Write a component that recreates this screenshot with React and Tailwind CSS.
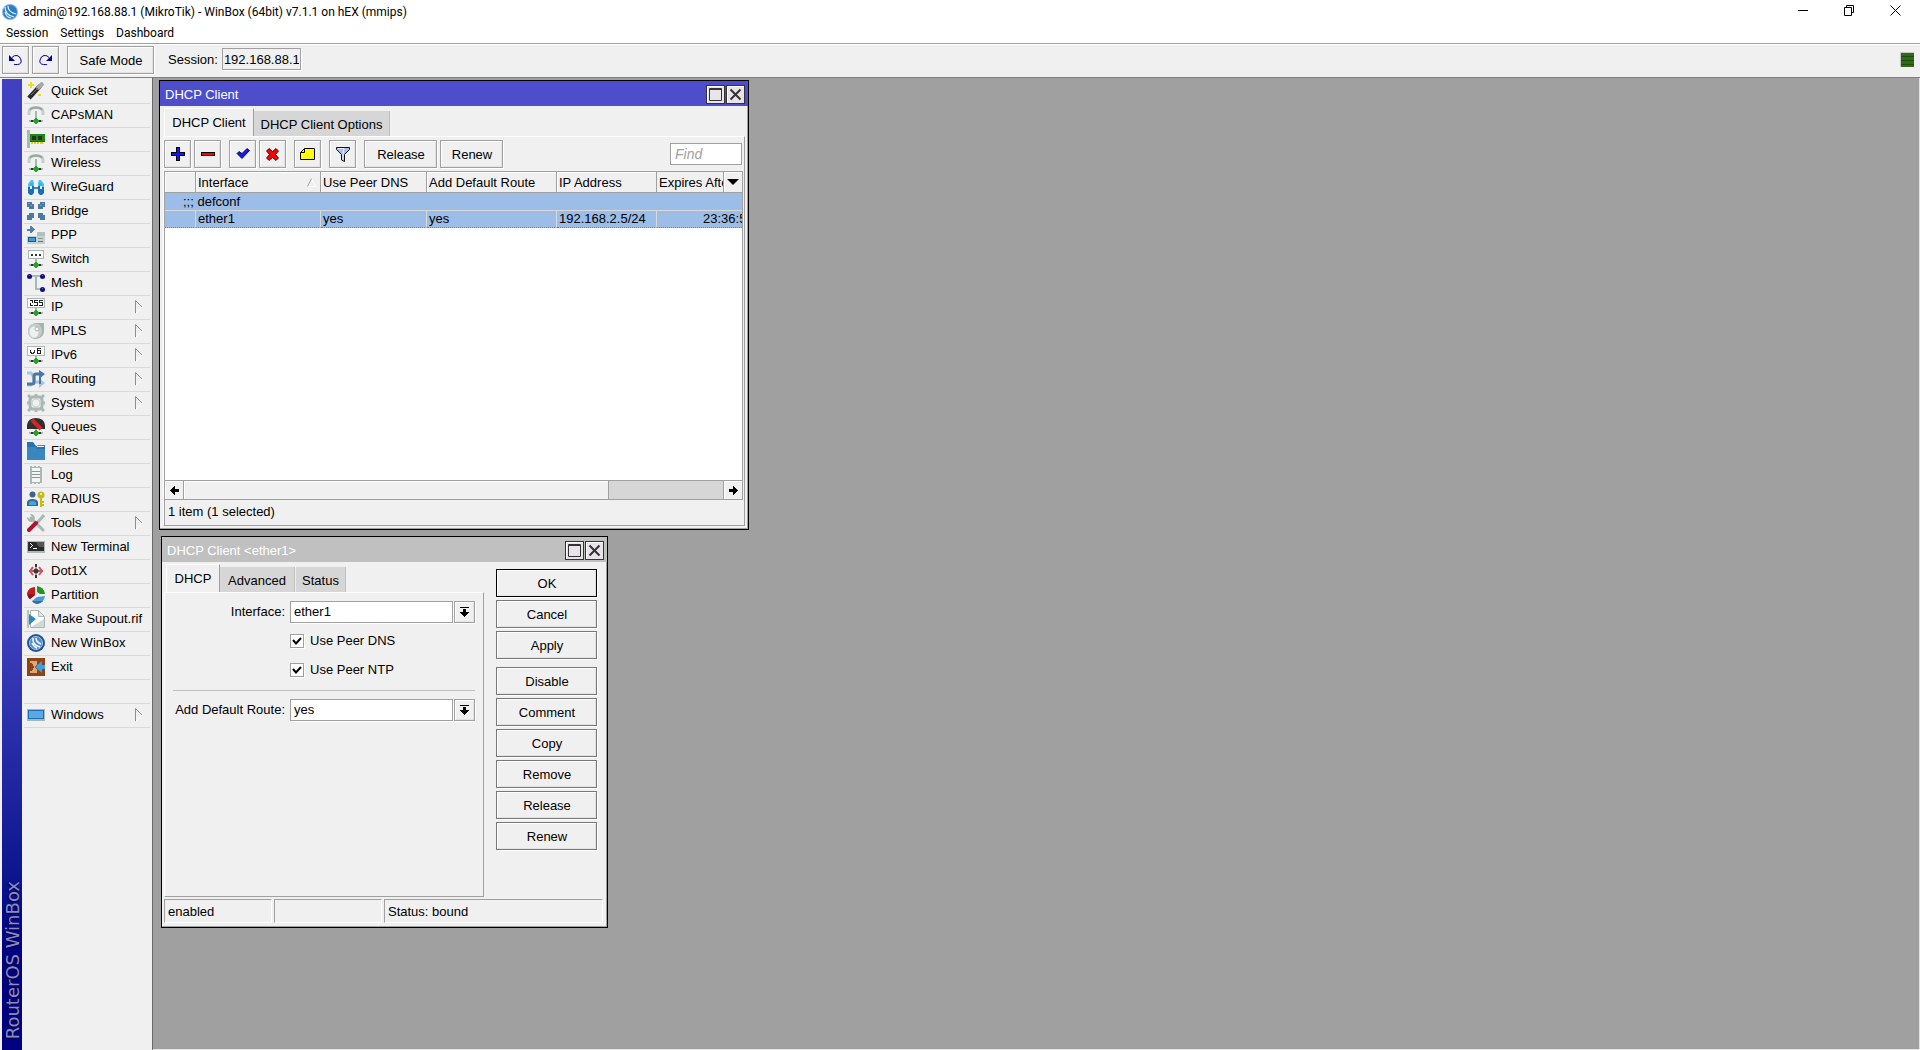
import React from "react";

const bevel =
  "border border-[#a0a0a0] bg-[#f0f0f0] shadow-[1px_1px_0_#fff,inset_1px_1px_0_#fff,inset_-1px_-1px_0_#e3e3e3]";

const Svg = ({ children, smooth }) => (
  <svg
    width="18"
    height="18"
    viewBox="0 0 18 18"
    fill="none"
    shapeRendering={smooth ? "auto" : "crispEdges"}
    className="shrink-0"
    aria-hidden="true"
  >
    {children}
  </svg>
);

/* Network plug drawn under several icons */
const Plug = () => (
  <>
    <path d="M2 14h14v2H2z" fill="#a9b8b4" />
    <path d="M4 14h10v2H4z" fill="#333" />
    <path d="M8 12h2v1h1v1h1v2h-1v1h-1v1H8v-1H7v-1H6v-2h1v-1h1z" fill="#1fa81f" />
  </>
);

const Antenna = () => (
  <Svg>
    <g shapeRendering="auto">
      <path d="M2 9V6Q2 1.500 9 1.500T16 6V9" stroke="#c3cfcc" strokeWidth="3" />
      <path d="M3 4Q5 1.500 9 1.500T15 4" stroke="#98a6a2" strokeWidth="2" />
    </g>
    <path d="M8 5h2v8H8z" fill="#a9b8b4" />
    <Plug />
  </Svg>
);

const icons = {
  wand: (
    <Svg smooth>
      <path d="M2 16L13 4" stroke="#2b2b2b" strokeWidth="4.500" />
      <path d="M11.500 5.500l3-3" stroke="#a8a8a8" strokeWidth="4.500" strokeLinecap="round" />
      <path d="M4 13l7-7" stroke="#6d6d6d" strokeWidth="1" />
      <path d="M3 0h2v2h2v2H5v2H3V4H1V2h2zM11 12h3v2h-3z" fill="#e6e01c" />
    </Svg>
  ),
  antenna: <Antenna />,
  nic: (
    <Svg>
      <path d="M0 0h3v18H0z" fill="#a9b8b4" />
      <path d="M3 4h15v8H3z" fill="#1f8a12" />
      <path d="M5 6h4v4H5zM11 6h4v4h-4z" fill="#2a2f2a" />
      <path d="M4 12h2v2H4zM7 12h2v2H7zM10 12h2v2h-2zM13 12h3v2h-3z" fill="#e0cf13" />
      <path d="M3 11h15v1H3z" fill="#136b0a" />
    </Svg>
  ),
  wireguard: (
    <Svg smooth>
      <path d="M4 2h2l1 3v4H5V5L3 6v4H1V6zM12 2h2l3 4v4h-2V6l-2-1v4h-2V5z" fill="#4fc1f5" />
      <path d="M1 9h2v2h2V8h2v7l-2 2H3l-2-2zM11 8h2v3h2V9h2v6l-2 2h-2l-2-2z" fill="#1a6fb8" />
      <path d="M3 5h3v3H3zM12 5h3v3h-3z" fill="#38b0ea" />
      <path d="M7 9h4v2H7z" fill="#2d8fd2" />
    </Svg>
  ),
  bridge: (
    <Svg>
      <g fill="#4879a3">
        <path d="M0 0h5v2h2v5H2V5H0z" />
        <path d="M18 0h-5v2h-2v5h5V5h2z" />
        <path d="M0 18h5v-2h2v-5H2v2H0z" />
        <path d="M18 18h-5v-2h-2v-5h5v2h2z" />
      </g>
      <path d="M1 1h2v1H1zM15 1h2v1h-2zM3 3h2v1H3zM13 3h2v1h-2z" fill="#6d9cc2" />
    </Svg>
  ),
  ppp: (
    <Svg>
      <path d="M0 3h3V0h2v1h1v1h1v1h1v1H7v1H6v1H5v1H3V5H0z" fill="#5480a8" />
      <path d="M10 6h8v6h-8z" fill="#b5c0bd" />
      <path d="M0 10h18v8H0z" fill="#c9d1cf" />
      <path d="M1 11h8v5H1z" fill="#175f9c" />
      <path d="M2 12h6v3H2z" fill="#3c9be0" />
      <path d="M11 12h5v1h-5z" fill="#8d9a96" />
      <path d="M11 15h5v1h-5z" fill="#27a31d" />
    </Svg>
  ),
  switch: (
    <Svg>
      <path d="M1 0h16v9H1z" fill="#a9b8b4" />
      <path d="M2 1h14v7H2z" fill="#fff" />
      <path d="M4 4h2v2H4zM8 4h2v2H8zM12 4h2v2h-2z" fill="#333" />
      <path d="M8 9h2v4H8z" fill="#a9b8b4" />
      <Plug />
    </Svg>
  ),
  mesh: (
    <Svg>
      <path d="M3 2h12M9 2v13h6" stroke="#a9b8b4" strokeWidth="2" />
      <g shapeRendering="auto" fill="#10107e">
        <circle cx="2.500" cy="2.500" r="2.500" />
        <circle cx="15.500" cy="2.500" r="2.500" />
        <circle cx="15.500" cy="15.500" r="2.500" />
      </g>
      <path d="M2 1h1v1H2zM15 1h1v1h-1zM15 14h1v1h-1z" fill="#5f5fd0" />
    </Svg>
  ),
  ip: (
    <Svg>
      <path d="M0 0h18v10H0z" fill="#a9b8b4" />
      <path d="M1 1h16v8H1z" fill="#fff" />
      <path
        d="M3 2h3v3H4v2h2v1H3V5h2V3H3zM7 2h4v1H8v1h3v4H7V7h3V5H7zM12 2h4v1h-3v1h3v4h-4V7h3V5h-3z"
        fill="#222"
      />
      <path d="M8 10h2v2H8z" fill="#a9b8b4" />
      <Plug />
    </Svg>
  ),
  mpls: (
    <Svg smooth>
      <path d="M8 1h9v9q-1 6-8 7H7Q1 15 1 9 1 3 8 1z" fill="#a5b4b0" />
      <ellipse cx="8" cy="9" rx="7" ry="7.500" fill="#c3cdca" />
      <ellipse cx="7" cy="10" rx="4.500" ry="5.500" fill="#eef1f0" />
      <circle cx="10" cy="7" r="2" fill="#fff" stroke="#a5b4b0" />
    </Svg>
  ),
  ipv6: (
    <Svg>
      <path d="M0 0h18v10H0z" fill="#a9b8b4" />
      <path d="M1 1h16v8H1z" fill="#fff" />
      <path d="M3 4h1v2h1v1h1V6h1V4h1v3H7v1H4V7H3z" fill="#333" />
      <path d="M10 2h4v1h-3v1h3v4h-4zM11 5v2h2V5z" fillRule="evenodd" fill="#222" />
      <path d="M8 10h2v2H8z" fill="#a9b8b4" />
      <Plug />
    </Svg>
  ),
  routing: (
    <Svg smooth>
      <path d="M0 3h4l3 4v5h6M0 15h5" stroke="#a8c6e0" strokeWidth="3" />
      <path d="M12 8l6 5-6 5z" fill="#a8c6e0" />
      <path d="M0 14h5q2 0 2-2V6q0-2 2-2h4" stroke="#4879a3" strokeWidth="3" />
      <path d="M7 4v9M13 4v10" stroke="#4879a3" strokeWidth="2" />
      <path d="M12 0l6 4-6 5z" fill="#4879a3" />
    </Svg>
  ),
  gear: (
    <Svg smooth>
      <rect x="3" y="3" width="12" height="12" rx="3" stroke="#a9b8b4" strokeWidth="3" />
      <path
        d="M9 0v3M9 15v3M0 9h3M15 9h3M1 1l3 3M17 1l-3 3M1 17l3-3M17 17l-3-3"
        stroke="#a9b8b4"
        strokeWidth="3"
      />
      <circle cx="9" cy="9" r="4" stroke="#c7d1ce" fill="#f0f0f0" />
    </Svg>
  ),
  queues: (
    <Svg>
      <path shapeRendering="auto" d="M0 11V7Q1 0 9 0t9 7v4z" fill="#303030" />
      <path shapeRendering="auto" d="M5 2l9 9" stroke="#d3252b" strokeWidth="4" />
      <path d="M8 11h2v2H8z" fill="#a9b8b4" />
      <Plug />
    </Svg>
  ),
  folder: (
    <Svg smooth>
      <path d="M0 0h6l3 4h9v14H0z" fill="#2673ad" />
      <path d="M0 5h9l2-2h7v15H0z" fill="#3a87bf" />
      <path d="M10 4.500h7" stroke="#fff" />
      <path d="M11 5h7v2H9z" fill="#2673ad" />
    </Svg>
  ),
  log: (
    <Svg>
      <path d="M3 0h2v1h2V0h2v1h2V0h2v1h2v16h-2v1h-2v-1H9v1H7v-1H5v1H3z" fill="#a9b8b4" />
      <path d="M5 2h8v14H5z" fill="#f4f6f5" />
      <path d="M5 5h8v1H5zM5 8h8v1H5zM5 11h8v1H5z" fill="#8b9995" />
    </Svg>
  ),
  radius: (
    <Svg smooth>
      <circle cx="5.500" cy="4.500" r="3" fill="#3d6588" />
      <path d="M0 16V12q1-3 5.500-3t5.500 3v4z" fill="#3d6588" />
      <path d="M2 15V12q1-1 3-1t4 1v3z" fill="#38a8ee" />
      <circle cx="14" cy="5" r="3.500" fill="#c9bb10" />
      <circle cx="14" cy="4" r="1" fill="#f0f0f0" />
      <path d="M14 8v9M14 12h3M14 15h3" stroke="#c9bb10" strokeWidth="2" />
    </Svg>
  ),
  tools: (
    <Svg smooth>
      <path d="M4 4l12 12" stroke="#a9b8b4" strokeWidth="3" strokeLinecap="round" />
      <path d="M0 3q0 5 5 5l3-3q0-5-5-5l2 3-2 2z" fill="#a9b8b4" />
      <path d="M17 1l-7 8" stroke="#a9b8b4" strokeWidth="3" />
      <path d="M9 9l-7 7" stroke="#b0122b" strokeWidth="4" strokeLinecap="round" />
    </Svg>
  ),
  terminal: (
    <Svg>
      <path d="M0 3h18v12H0z" fill="#b0bab7" />
      <path d="M1 4h16v9H1z" fill="#2b2b2b" />
      <path d="M9 4h8v5h-5z" fill="#555" />
      <path d="M3 5h1v1h1v1h1v1H5v1H4v1H3V9h1V8h1V7H4V6H3zM6 10h4v1H6z" fill="#fff" />
    </Svg>
  ),
  dot1x: (
    <Svg smooth>
      <path d="M6 5L3 9l3 4M12 5l3 4-3 4" stroke="#d9505c" strokeWidth="2" />
      <path d="M2 9h14" stroke="#d9505c" strokeWidth="2" />
      <path d="M9 2v3M9 13v3" stroke="#333" strokeWidth="2" />
      <path d="M9 5v8M5 9h8" stroke="#777" strokeWidth="1" />
      <circle cx="9" cy="9" r="2.500" fill="#3c3c3c" />
    </Svg>
  ),
  partition: (
    <Svg smooth>
      <path d="M8 1v8l-5 4Q0 11 0 7 2 1 8 1z" fill="#c01c22" />
      <path d="M1 8q0 4 2 5l5-4z" fill="#8e0f16" />
      <path d="M10 0q7 1 8 8h-5l-3-2z" fill="#1e971c" />
      <path d="M10 11l8-1q-1 7-8 8-3 0-5-3z" fill="#4b9ad5" />
      <path d="M5 15q2 3 5 3 4-1 6-3z" fill="#2d70ab" />
    </Svg>
  ),
  supout: (
    <Svg smooth>
      <path d="M3.500 .5h8l6 6v11h-14z" fill="#fff" stroke="#a9b8b4" />
      <path d="M11.500 .5v6h6z" fill="#e3e9e7" stroke="#a9b8b4" />
      <path d="M4 17l13-8v8z" fill="#d2dad8" />
      <path d="M2 4l7 5-7 6z" fill="#2b86c8" />
      <path d="M0 0h2v18H0z" fill="#b7c3c0" />
    </Svg>
  ),
  winbox: (
    <Svg smooth>
      <circle cx="9" cy="9" r="9" fill="#25538f" />
      <circle cx="9" cy="9" r="6.500" fill="#4b8cd6" stroke="#a9c8ee" />
      <path d="M6 4q-1 7 7 9M9 4q0 4 5 6M5 9q2 4 5 5" stroke="#fff" strokeWidth="1.500" />
    </Svg>
  ),
  exit: (
    <Svg>
      <path d="M0 0h18v18H0z" fill="#8d4517" />
      <path d="M3 3h7v3L8 9l2 3v3H3v-2h2l2-4-2-4H3z" fill="#e0a678" />
      <path shapeRendering="auto" d="M8 9l7-6v12z" fill="#3ba0e8" />
      <path d="M14 7h4v4h-4z" fill="#3ba0e8" />
    </Svg>
  ),
  monitor: (
    <Svg>
      <path d="M0 3h18v12H0z" fill="#a9b8b4" />
      <path d="M1 4h16v9H1z" fill="#1c6fb5" />
      <path d="M2 5h14v7H2z" fill="#5aa8e4" />
    </Svg>
  ),
};

const menu = [
  { label: "Quick Set", icon: "wand" },
  { label: "CAPsMAN", icon: "antenna" },
  { label: "Interfaces", icon: "nic" },
  { label: "Wireless", icon: "antenna" },
  { label: "WireGuard", icon: "wireguard" },
  { label: "Bridge", icon: "bridge" },
  { label: "PPP", icon: "ppp" },
  { label: "Switch", icon: "switch" },
  { label: "Mesh", icon: "mesh" },
  { label: "IP", icon: "ip", sub: true },
  { label: "MPLS", icon: "mpls", sub: true },
  { label: "IPv6", icon: "ipv6", sub: true },
  { label: "Routing", icon: "routing", sub: true },
  { label: "System", icon: "gear", sub: true },
  { label: "Queues", icon: "queues" },
  { label: "Files", icon: "folder" },
  { label: "Log", icon: "log" },
  { label: "RADIUS", icon: "radius" },
  { label: "Tools", icon: "tools", sub: true },
  { label: "New Terminal", icon: "terminal" },
  { label: "Dot1X", icon: "dot1x" },
  { label: "Partition", icon: "partition" },
  { label: "Make Supout.rif", icon: "supout" },
  { label: "New WinBox", icon: "winbox" },
  { label: "Exit", icon: "exit" },
  null,
  { label: "Windows", icon: "monitor", sub: true },
];

const MenuItem = ({ item }) => (
  <li className="h-6 border-b border-[#d9d9d9]">
    {item && (
      <button className="flex h-full w-full items-center gap-[6px] pb-px pl-[3px] text-left leading-4 whitespace-nowrap">
        {icons[item.icon]}
        <span className="flex-1">{item.label}</span>
        {item.sub && (
          <svg width="8" height="14" viewBox="0 0 8 14" className="mr-[7px]" aria-hidden="true">
            <path d="M.5 13.500V.5L7 7" fill="none" stroke="#8e8e8e" />
            <path d="M7 7L.5 13.500" stroke="#fff" />
          </svg>
        )}
      </button>
    )}
  </li>
);

const Sidebar = () => (
  <aside className="flex shrink-0 border-r border-[#696969] bg-[#f0f0f0] pr-[2px] pl-[2px]">
    <div className="mt-px flex w-5 items-end justify-end bg-linear-to-b from-[#4040c0] from-55% to-[#000080] to-90% pb-[11px]">
      <span className="rotate-180 font-['DejaVu_Sans'] text-[18px] leading-[18px] whitespace-nowrap text-[#8c8cb8] [writing-mode:vertical-rl] [text-shadow:-1px_-1px_1px_#000040]">
        RouterOS WinBox
      </span>
    </div>
    <nav className="ml-[2px] w-[126px] pt-[2px]">
      <ul>
        {menu.map((item, i) => (
          <MenuItem key={i} item={item} />
        ))}
      </ul>
    </nav>
  </aside>
);

const WindowTitle = ({ title, active }) => (
  <div
    className={
      active
        ? "flex h-[25px] items-center gap-[1px] bg-[#4e4ecc] pt-[2px] pr-[3px] pl-[5px] text-white"
        : "flex h-[25px] items-center gap-[1px] bg-[#c0c0c0] pt-[2px] pr-[3px] pl-[5px] text-white"
    }
  >
    <h2 className="flex-1">{title}</h2>
    <button
      aria-label="Maximize"
      className="flex size-[19px] items-center justify-center border border-[#333] bg-[#e8e4ea] shadow-[inset_1px_1px_0_#fff]"
    >
      <svg width="13" height="13" viewBox="0 0 13 13" aria-hidden="true">
        <path d="M.5 .5h12v12H.5zM0 1.500h13" fill="none" stroke="#333" />
      </svg>
    </button>
    <button
      aria-label="Close"
      className="flex size-[19px] items-center justify-center border border-[#333] bg-[#e8e4ea] shadow-[inset_1px_1px_0_#fff]"
    >
      <svg width="13" height="13" viewBox="0 0 13 13" aria-hidden="true">
        <path d="M1.500 1.500l10 10M11.500 1.500l-10 10" stroke="#333" strokeWidth="2" />
      </svg>
    </button>
  </div>
);

const Tab = ({ label, active, width }) =>
  active ? (
    <button
      role="tab"
      aria-selected="true"
      className={`-mb-px h-[29px] border-t border-r border-l border-white border-r-[#a0a0a0] bg-[#f0f0f0] pb-px whitespace-nowrap ${width}`}
    >
      {label}
    </button>
  ) : (
    <button
      role="tab"
      aria-selected="false"
      className={`mr-px h-[25px] border-r border-[#c0c0c0] bg-[#d6d6d6] pt-[2px] whitespace-nowrap ${width}`}
    >
      {label}
    </button>
  );

const ToolButton = ({ label, className = "", children }) => (
  <button
    aria-label={label}
    className={`flex h-7 w-[27px] items-center justify-center ${bevel} ${className}`}
  >
    {children}
  </button>
);

const ListToolbar = () => (
  <div className="flex items-start pt-[3px] pb-[3px]">
    <ToolButton label="Add">
      <svg width="14" height="14" viewBox="0 0 14 14" shapeRendering="crispEdges">
        <path d="M5 0h4v5h5v4H9v5H5V9H0V5h5z" fill="#000" />
        <path d="M6 1h2v5h5v2H8v5H6V8H1V6h5z" fill="#1414ff" />
      </svg>
    </ToolButton>
    <ToolButton label="Remove" className="ml-[3px]">
      <svg width="14" height="14" viewBox="0 0 14 14" shapeRendering="crispEdges">
        <path d="M0 5h14v4H0z" fill="#000" />
        <path d="M1 6h12v2H1z" fill="#f00" />
      </svg>
    </ToolButton>
    <ToolButton label="Enable" className="ml-2">
      <svg width="14" height="12" viewBox="0 0 14 12">
        <path d="M1 5.500L3 3.500l3 2 5-5 2.500 2L6 10.500z" fill="#1414ff" stroke="#000" strokeWidth=".8" />
      </svg>
    </ToolButton>
    <ToolButton label="Disable" className="ml-[3px]">
      <svg width="13" height="13" viewBox="0 0 13 13">
        <path
          d="M3 .5l3.500 3 3.500-3 2.500 2.500-3 3.500 3 3.500-2.500 2.500-3.500-3-3.500 3L.5 10l3-3.500-3-3.500z"
          fill="#f00"
          stroke="#000"
          strokeWidth=".8"
        />
      </svg>
    </ToolButton>
    <ToolButton label="Comment" className="ml-2">
      <svg width="15" height="12" viewBox="0 0 15 12">
        <path d="M4.500 .5h10v11H.5V4.500z" fill="#ff0" stroke="#000" />
        <path d="M4.500 .5v4h-4" fill="none" stroke="#000" />
      </svg>
    </ToolButton>
    <ToolButton label="Filter" className="ml-2 pl-px">
      <svg width="15" height="15" viewBox="0 0 15 15">
        <path d="M.5 .5h13v2L8.500 7.500v7L5.500 13V7.500L.5 2.500z" fill="#a9c0e6" stroke="#111" />
        <path d="M2 1.500h6L7 7v5.500" fill="none" stroke="#eaf1fc" />
      </svg>
    </ToolButton>
    <button className={`ml-2 h-7 w-[73px] pt-[2px] pl-px ${bevel}`}>Release</button>
    <button className={`ml-[3px] h-7 w-[63px] pt-[2px] pl-px ${bevel}`}>Renew</button>
    <input
      type="text"
      aria-label="Find"
      placeholder="Find"
      className="mt-[3px] mr-[2px] ml-auto h-[22px] w-[72px] border border-[#a0a0a0] bg-white px-1 text-[14px] italic outline-none placeholder:text-[#a0a0a0]"
    />
  </div>
);

const th =
  "h-[21px] border-r border-b border-[#a0a0a0] p-0 pt-px pl-[2px] text-left font-normal shadow-[inset_1px_1px_0_#fff]";
const td =
  "h-[17px] border-r border-b border-r-[#d9d9d9] border-b-[#808080] [border-bottom-style:dotted] p-0 pl-[2px]";

const ClientTable = () => (
  <div className="mr-px flex flex-1 flex-col border border-[#a0a0a0] bg-white">
    <div className="relative flex-1 overflow-hidden">
      <table className="w-full table-fixed border-separate border-spacing-0 leading-4 whitespace-nowrap">
        <colgroup>
          <col className="w-[31px]" />
          <col className="w-[125px]" />
          <col className="w-[106px]" />
          <col className="w-[130px]" />
          <col className="w-[100px]" />
          <col />
        </colgroup>
        <thead className="bg-[#f0f0f0]">
          <tr>
            <th className={th} aria-label="Flags" />
            <th className={th}>
              <div className="flex items-center justify-between pr-1">
                Interface
                <svg width="9" height="9" viewBox="0 0 9 9" aria-hidden="true">
                  <path d="M4.500 .5l4 8h-8" fill="none" stroke="#fff" />
                  <path d="M.5 8.500L4.500 .5" stroke="#a0a0a0" />
                </svg>
              </div>
            </th>
            <th className={th}>Use Peer DNS</th>
            <th className={th}>Add Default Route</th>
            <th className={th}>IP Address</th>
            <th className="h-[21px] overflow-hidden border-b border-[#a0a0a0] p-0 pt-px pl-[2px] text-left font-normal">
              Expires After
            </th>
          </tr>
        </thead>
        <tbody className="bg-[#9bbde8]">
          <tr>
            <td colSpan={6} className="h-[18px] border-b border-[#d9d9d9] p-0 pl-[18px]">
              ;;; defconf
            </td>
          </tr>
          <tr>
            <td className={td} />
            <td className={td}>ether1</td>
            <td className={td}>yes</td>
            <td className={td}>yes</td>
            <td className={td}>192.168.2.5/24</td>
            <td className="overflow-hidden border-b border-[#808080] [border-bottom-style:dotted] p-0 pl-[46px]">
              23:36:50
            </td>
          </tr>
        </tbody>
      </table>
      <button
        aria-label="Columns"
        className="absolute top-0 right-0 flex h-[21px] w-[19px] items-center justify-center border-b border-l border-[#a0a0a0] bg-[#f0f0f0] shadow-[inset_1px_1px_0_#fff]"
      >
        <svg width="12" height="6" viewBox="0 0 12 6">
          <path d="M0 0h12L6 6z" fill="#000" />
        </svg>
      </button>
    </div>
    <div className="flex h-[19px] border-t border-[#a0a0a0] bg-[#d6d6d6]">
      <button
        aria-label="Scroll left"
        className="flex w-[19px] items-center justify-center border-r border-[#a0a0a0] bg-[#f0f0f0] shadow-[inset_1px_1px_0_#fff]"
      >
        <svg width="9" height="9" viewBox="0 0 9 9" shapeRendering="crispEdges">
          <path d="M4 0h1v3h4v3H5v3H4V8H3V7H2V6H1V5H0V4h1V3h1V2h1V1h1z" fill="#000" />
        </svg>
      </button>
      <div className="w-[425px] border-r border-[#a0a0a0] bg-[#f0f0f0] shadow-[inset_1px_1px_0_#fff]" />
      <button
        aria-label="Scroll right"
        className="ml-auto flex w-[19px] items-center justify-center border-l border-[#a0a0a0] bg-[#f0f0f0] shadow-[inset_1px_1px_0_#fff]"
      >
        <svg width="9" height="9" viewBox="0 0 9 9" shapeRendering="crispEdges">
          <path d="M4 0h1v1h1v1h1v1h1v1h1v1H8v1H7v1H6v1H5v1H4V6H0V3h4z" fill="#000" />
        </svg>
      </button>
    </div>
  </div>
);

const ListWindow = () => (
  <section className="absolute top-[2px] left-[6px] flex h-[450px] w-[590px] flex-col border border-black bg-[#f0f0f0] shadow-[inset_-1px_-1px_0_#a0a0a0]">
    <WindowTitle title="DHCP Client" active />
    <div role="tablist" className="mt-[2px] flex items-end pl-1">
      <Tab label="DHCP Client" active width="w-[90px]" />
      <Tab label="DHCP Client Options" width="w-[136px]" />
    </div>
    <div className="mr-[3px] mb-[3px] ml-[3px] flex flex-1 flex-col border border-white border-r-[#a0a0a0] border-b-[#a0a0a0]">
      <ListToolbar />
      <ClientTable />
      <p className="h-[25px] border-l border-[#a0a0a0] pl-[3px] leading-[23px]">1 item (1 selected)</p>
    </div>
  </section>
);

const Combo = ({ id, label, value }) => (
  <div className="grid grid-cols-[112px_1fr_21px] items-center">
    <label htmlFor={id} className="text-right whitespace-nowrap">
      {label}
    </label>
    <select
      id={id}
      defaultValue={value}
      className="mr-px ml-[5px] h-[22px] appearance-none border border-[#a0a0a0] bg-white pl-[3px] shadow-[1px_1px_0_#fff] outline-none"
    >
      <option>{value}</option>
    </select>
    <button aria-label={`Open ${label}`} className={`flex h-[22px] items-center justify-center ${bevel}`}>
      <svg width="9" height="10" viewBox="0 0 9 10" shapeRendering="crispEdges">
        <path d="M0 0h9v1H0zM3 2h3v3h3v1H8v1H7v1H6v1H5v1H4V9H3V8H2V7H1V6H0V5h3z" fill="#000" />
      </svg>
    </button>
  </div>
);

const Check = ({ label, className }) => (
  <label className={`ml-[117px] flex h-[14px] items-center gap-[6px] ${className}`}>
    <span className="relative size-[14px]">
      <input
        type="checkbox"
        defaultChecked
        className="peer block size-[14px] appearance-none border border-[#a0a0a0] bg-white shadow-[1px_1px_0_#fff]"
      />
      <svg
        width="14"
        height="14"
        viewBox="0 0 14 14"
        className="pointer-events-none absolute inset-0 hidden peer-checked:block"
        aria-hidden="true"
      >
        <path d="M3 6l3 3.500L11 4" fill="none" stroke="#000" strokeWidth="2" />
      </svg>
    </span>
    {label}
  </label>
);

const SideButton = ({ label, first }) => (
  <button
    className={
      first
        ? "h-7 w-[101px] border border-black bg-[#f0f0f0] pt-[2px] pl-px shadow-[1px_1px_0_#fff,inset_1px_1px_0_#fff,inset_-1px_-1px_0_#e3e3e3]"
        : "h-7 w-[101px] border border-[#787878] bg-[#f0f0f0] pt-[2px] pl-px shadow-[1px_1px_0_#fff,inset_1px_1px_0_#fff,inset_-1px_-1px_0_#e3e3e3]"
    }
  >
    {label}
  </button>
);

const statusCell =
  "h-6 border border-white border-t-[#a0a0a0] border-l-[#a0a0a0] pl-[3px] leading-[23px]";

const ClientWindow = () => (
  <section className="absolute top-[458px] left-[8px] flex h-[392px] w-[447px] flex-col border border-black bg-[#f0f0f0] shadow-[inset_-1px_-1px_0_#a0a0a0]">
    <WindowTitle title="DHCP Client <ether1>" />
    <div className="flex flex-1">
      <div className="ml-[2px] flex flex-1 flex-col pt-[2px]">
        <div role="tablist" className="flex items-end pl-[2px]">
          <Tab label="DHCP" active width="w-[54px]" />
          <Tab label="Advanced" width="w-[75px]" />
          <Tab label="Status" width="w-[50px]" />
        </div>
        <form className="flex flex-1 flex-col border border-white border-r-[#a0a0a0] border-b-[#a0a0a0] px-2 pt-2">
          <Combo id="interface" label="Interface:" value="ether1" />
          <Check label="Use Peer DNS" className="mt-[11px]" />
          <Check label="Use Peer NTP" className="mt-[15px]" />
          <hr className="mt-[13px] mb-2 border-[#c0c0c0]" />
          <Combo id="route" label="Add Default Route:" value="yes" />
        </form>
      </div>
      <div className="mr-[10px] ml-3 flex flex-col gap-2 pt-[7px]">
        <div className="flex flex-col gap-[3px]">
          <SideButton label="OK" first />
          <SideButton label="Cancel" />
          <SideButton label="Apply" />
        </div>
        <div className="flex flex-col gap-[3px]">
          <SideButton label="Disable" />
          <SideButton label="Comment" />
          <SideButton label="Copy" />
          <SideButton label="Remove" />
          <SideButton label="Release" />
          <SideButton label="Renew" />
        </div>
      </div>
    </div>
    <div className="mt-[2px] mr-1 mb-1 ml-[2px] grid grid-cols-[108px_108px_1fr] gap-x-[2px]">
      <p className={statusCell}>enabled</p>
      <p className={statusCell} />
      <p className={statusCell}>Status: bound</p>
    </div>
  </section>
);

const Header = () => (
  <header className="bg-white">
    <div className="flex h-[23px] items-center pr-[2px] pl-[2px] font-['Roboto',sans-serif] text-[12px]">
      <svg width="16" height="16" viewBox="0 0 16 16" aria-hidden="true">
        <circle cx="8" cy="8" r="8" fill="#8fb4d6" />
        <circle cx="8" cy="8" r="7" fill="#2a80c6" />
        <path d="M3 3q0 8 9 10M6 2q0 6 8 8M3 8q1 5 6 6" fill="none" stroke="#e4f1fc" strokeWidth="1.200" />
      </svg>
      <h1 className="ml-[5px] flex-1 whitespace-nowrap">
        admin@192.168.88.1 (MikroTik) - WinBox (64bit) v7.1.1 on hEX (mmips)
      </h1>
      <button aria-label="Minimize" className="flex h-full w-[46px] items-center justify-center">
        <svg width="11" height="11" viewBox="0 0 11 11">
          <path d="M0 4.500h10" stroke="#000" />
        </svg>
      </button>
      <button aria-label="Restore" className="flex h-full w-[46px] items-center justify-center pb-[2px]">
        <svg width="11" height="11" viewBox="0 0 11 11">
          <path d="M.5 2.500h7v8h-7zM2.500 2V.5h7v7H8" fill="none" stroke="#000" />
        </svg>
      </button>
      <button aria-label="Close" className="flex h-full w-[46px] items-center justify-center pb-[2px]">
        <svg width="11" height="11" viewBox="0 0 11 11">
          <path d="M.5 .5l10 10M10.500 .5l-10 10" stroke="#000" />
        </svg>
      </button>
    </div>
    <nav className="flex h-5 items-center gap-3 pl-[6px] font-['Roboto',sans-serif] text-[12px]">
      <button>Session</button>
      <button>Settings</button>
      <button>Dashboard</button>
    </nav>
    <div className="flex items-start border-t border-b border-[#a0a0a0] border-b-[#808080] bg-[#f0f0f0] pt-[2px] pr-[6px] pb-[3px] pl-[2px] shadow-[inset_0_1px_0_#fff]">
      <ToolButton label="Undo">
        <svg width="13" height="12" viewBox="0 0 13 12">
          <path d="M3 3.500Q5 1 8 1.500t4 4.500-3.500 4.500T5 10" fill="none" stroke="#00008b" strokeWidth="1" />
          <path d="M0 1v6h6z" fill="#00008b" />
        </svg>
      </ToolButton>
      <ToolButton label="Redo" className="ml-[3px]">
        <svg width="13" height="12" viewBox="0 0 13 12">
          <path d="M10 3.500Q8 1 5 1.500T1 6t3.500 4.500T8 10" fill="none" stroke="#00008b" strokeWidth="1" />
          <path d="M13 1v6H7z" fill="#00008b" />
        </svg>
      </ToolButton>
      <button className={`ml-2 h-7 w-[87px] pt-[2px] pl-px ${bevel}`}>Safe Mode</button>
      <label htmlFor="session" className="ml-[14px] leading-7">
        Session:
      </label>
      <input
        id="session"
        readOnly
        defaultValue="192.168.88.1"
        className="mt-[2px] ml-[4px] h-[22px] w-[79px] border border-[#a0a0a0] bg-[#f0f0f0] px-px shadow-[1px_1px_0_#fff] outline-none"
      />
      <div className="mt-[6px] ml-auto h-[15px] w-[14px] border-t border-l border-[#c8c8c8] bg-[repeating-linear-gradient(#2f6b17_0_3px,#1f4d0d_3px_4px)]" />
    </div>
  </header>
);

const App = () => {
  return (
    <div className="flex h-screen flex-col overflow-hidden bg-[#f0f0f0] font-['Liberation_Sans',Arial,sans-serif] text-[13px] text-black">
      <Header />
      <div className="flex min-h-0 flex-1">
        <Sidebar />
        <main className="relative flex-1 border-r border-b border-[#e3e3e3] bg-[#a0a0a0]">
          <ListWindow />
          <ClientWindow />
        </main>
      </div>
    </div>
  );
};

export default App;
